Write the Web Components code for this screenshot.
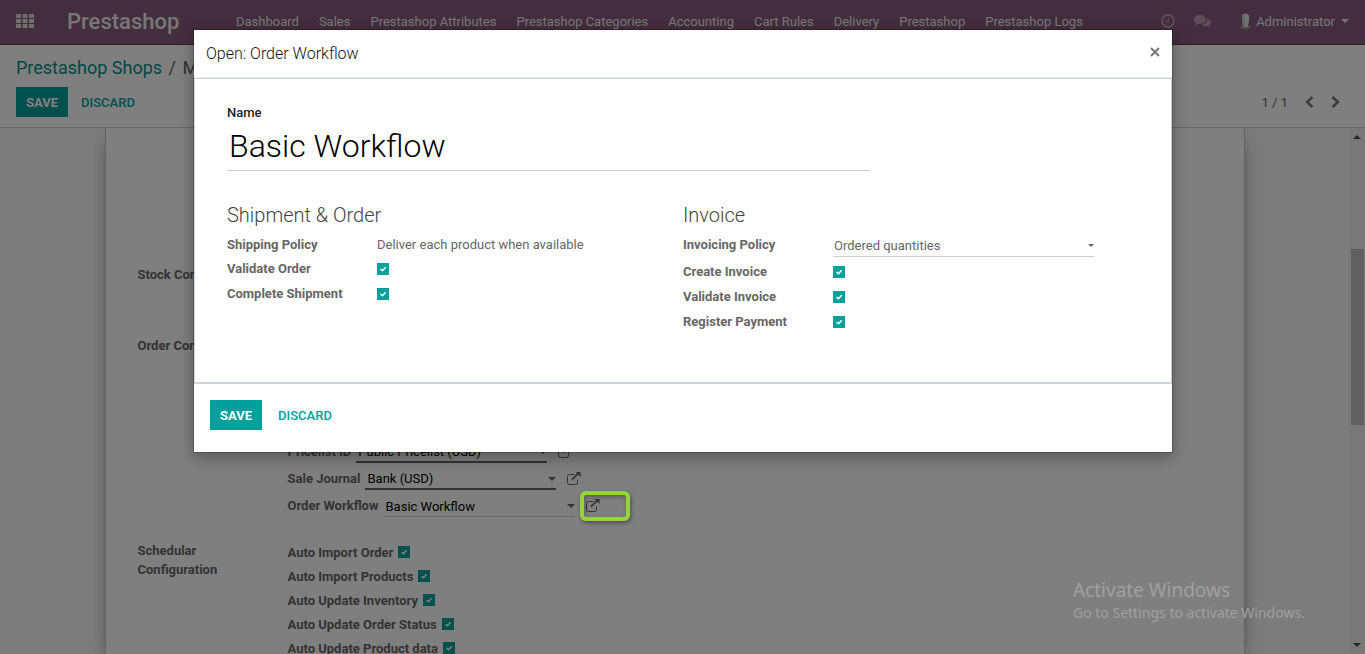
<!DOCTYPE html>
<html lang="en">
<head>
<meta charset="utf-8">
<meta name="viewport" content="width=device-width, initial-scale=1">
<title>Prestashop Shops</title>
<style>
    body {
        margin: 0;
        font-family: Roboto, "Liberation Sans", sans-serif;
        font-size: 13px;
        color: #666;
    }
</style>
</head>
<body>
<shop-app></shop-app>

<script>
const CARET = '<svg class="caret" width="8" height="4" viewBox="0 0 8 4" aria-hidden="true"><path d="M0 0h8L4 4z" fill="currentColor"/></svg>';

function define(name, html, setup) {
    const template = document.createElement('template');
    template.innerHTML = html;

    customElements.define(name, class extends HTMLElement {
        constructor() {
            super();
            this.attachShadow({ mode: 'open' });
            this.shadowRoot.appendChild(template.content.cloneNode(true));
        }

        connectedCallback() {
            if (setup) setup(this, this.shadowRoot);
        }
    });
}

define('flat-button', `
    <style>
        :host { display: inline-flex; }
        button {
            height: 30px;
            padding: 0 10px;
            border: 0;
            background: #00a09d;
            color: #fff;
            font: 700 13px Roboto, sans-serif;
            text-transform: uppercase;
            cursor: pointer;
        }
        :host([link]) button {
            padding: 0;
            background: none;
            color: #00a09d;
            font-weight: 500;
        }
    </style>
    <button type="button"><slot></slot></button>
`);

define('check-field', `
    <style>
        :host { display: flex; align-items: center; height: 24px; }
        label { width: var(--label-width, auto); margin-right: var(--label-gap, 5px); font-weight: 700; white-space: nowrap; }
        .box { display: grid; width: 12px; height: 12px; }
        input, svg { grid-area: 1 / 1; margin: 0; width: 12px; height: 12px; }
        input { appearance: none; background: #fff; border: 1px solid #00a09d; }
        input:checked { background: #00a09d; }
        svg { pointer-events: none; visibility: hidden; }
        input:checked + svg { visibility: visible; }
    </style>
    <label for="check"></label>
    <span class="box">
        <input id="check" type="checkbox" checked>
        <svg viewBox="0 0 12 12"><path d="M3.500 6l2 1.700 3.200-3.400" fill="none" stroke="#fff" stroke-width="1.600"/></svg>
    </span>
`, (host, root) => {
    root.querySelector('label').textContent = host.getAttribute('label');
});

define('select-field', `
    <style>
        :host { display: flex; align-items: center; height: 27px; }
        label { width: var(--label-width, auto); margin-right: var(--label-gap, 5px); font-weight: 700; white-space: nowrap; }
        .control { display: grid; align-items: center; width: 191px; }
        select {
            grid-area: 1 / 1;
            appearance: none;
            box-sizing: border-box;
            width: 100%;
            height: 22px;
            padding: 2px 16px 0 2px;
            border: 0;
            border-bottom: 2px solid #666;
            border-radius: 0;
            background: none;
            color: #000;
            font: 13px Roboto, sans-serif;
        }
        .caret { grid-area: 1 / 1; justify-self: end; pointer-events: none; }
        a { display: flex; margin-left: 11px; color: #666; }
        :host([light]) select { border-bottom: 1px solid #ccc; }
        :host([wide]) { align-items: flex-start; height: 26px; }
        :host([wide]) label { line-height: 24px; }
        :host([wide]) .control { flex: 1; }
        :host([wide]) select { height: 24px; padding-left: 1px; color: #666; }
        :host([wide]) .caret { width: 6px; height: 3px; }
        :host([wide]) a { display: none; }
    </style>
    <label for="choice"></label>
    <span class="control">
        <select id="choice"><option></option></select>
        ${CARET}
    </span>
    <a href="#open" aria-label="External link">
        <svg width="14" height="13" viewBox="0 0 14 13" fill="none" stroke="currentColor">
            <path d="M7.500 2.500h-5a2 2 0 0 0-2 2v6a2 2 0 0 0 2 2h6a2 2 0 0 0 2-2V7.500"/>
            <path d="M4.800 7.700L11 1.800" stroke-width="1.800"/>
            <path d="M8.500 0H13.500V5z" fill="currentColor" stroke="none"/>
        </svg>
    </a>
`, (host, root) => {
    root.querySelector('label').textContent = host.getAttribute('label');
    root.querySelector('option').textContent = host.getAttribute('value');
});

define('nav-bar', `
    <style>
        :host {
            display: flex;
            align-items: center;
            box-sizing: border-box;
            height: 45px;
            padding: 0 16px 2px;
            background: #895a7d;
            border-bottom: 1px solid #5f3f57;
            color: #eee;
            white-space: nowrap;
        }
        a { color: inherit; text-decoration: none; }
        button { display: flex; align-items: center; padding: 0; border: 0; background: none; color: inherit; font: 13px Roboto, sans-serif; }
        .brand { width: 169px; margin-left: 33px; font-size: 22px; font-weight: 500; }
        nav { display: flex; flex: 1; gap: 20px; }
        .tray { display: flex; align-items: center; gap: 19px; color: #b69cb0; }
        .user { margin-left: 10px; color: #eee; gap: 5px; }
        .user .caret { margin-left: 1px; }
    </style>
    <button type="button" aria-label="Applications">
        <svg width="18" height="14" viewBox="0 0 18 14" fill="#ddd"><path d="M0 0h5v4H0zM6.500 0h5v4h-5zM13 0h5v4h-5zM0 5h5v4H0zM6.500 5h5v4h-5zM13 5h5v4h-5zM0 10h5v4H0zM6.500 10h5v4h-5zM13 10h5v4h-5z"/></svg>
    </button>
    <a class="brand" href="#home">Prestashop</a>
    <nav></nav>
    <div class="tray">
        <button type="button" aria-label="Activities">
            <svg width="14" height="14" viewBox="0 0 14 14" fill="none" stroke="currentColor"><circle cx="7" cy="7" r="5.900" stroke-width="2"/><path d="M7.500 3.500v4H4.500" stroke-width="1.300"/></svg>
        </button>
        <button type="button" aria-label="Messages">
            <svg width="17" height="14" viewBox="0 0 17 14" fill="currentColor"><path d="M6 1c3.400 0 6 2 6 4.400S9.400 9.800 6 9.800c-.6 0-1.100 0-1.600-.1C3.500 10.500 2.200 11 1 11.100c.6-.6 1-1.300 1.100-2.200C.8 8.100 0 6.800 0 5.400 0 3 2.600 1 6 1z"/><path d="M13 4.300c2.300.7 4 2.100 4 4 0 1.200-.7 2.200-1.800 3 .1.800.5 1.500 1.100 2-1.200-.1-2.300-.5-3.200-1.200-2.300.4-4.600-.1-6-1.300 3.700 0 6.300-2.400 5.900-6.500z"/></svg>
        </button>
        <button class="user" type="button">
            <svg width="11" height="16" viewBox="0 0 11 16"><path d="M0 15c.3-1.600 1.500-2.300 3-2.700h5c1.500.4 2.700 1.100 3 2.700-3 1.200-8 1.200-11 0z" fill="#8fa09d"/><path d="M2 3.500C2 1.500 3.500.5 5.500.5S9 1.500 9 3.500v4C9 10 7.500 12 7.500 14h-4C3.500 12 2 10 2 7.500z" fill="#dce6e3"/><path d="M2 4v4c0 2 1.500 4 1.500 6h1V4z" fill="#bac8c4"/></svg>
            Administrator
            ${CARET}
        </button>
    </div>
`, (host, root) => {
    const items = ['Dashboard', 'Sales', 'Prestashop Attributes', 'Prestashop Categories', 'Accounting', 'Cart Rules', 'Delivery', 'Prestashop', 'Prestashop Logs'];
    root.querySelector('nav').innerHTML = items.map(item => `<a href="#menu">${item}</a>`).join('');
});

define('control-panel', `
    <style>
        :host {
            display: flex;
            flex-direction: column;
            box-sizing: border-box;
            height: 83px;
            padding: 12px 25px 10px 16px;
            gap: 8px;
            background: #fff;
            border-bottom: 1px solid #ccc;
        }
        .crumbs { font-size: 18px; line-height: 22px; }
        .crumbs a { color: #00918e; text-decoration: none; }
        .crumbs span { margin: 0 2px; }
        .bar { display: flex; align-items: center; }
        .bar flat-button + flat-button { margin-left: 13px; }
        .pager { display: flex; align-items: center; gap: 17px; margin-left: auto; }
        .pager button { display: flex; padding: 0; border: 0; background: none; color: #777; }
    </style>
    <div class="crumbs"><a href="#shops">Prestashop Shops</a> <span>/</span> M</div>
    <div class="bar">
        <flat-button>Save</flat-button>
        <flat-button link>Discard</flat-button>
        <div class="pager">
            1 / 1
            <button type="button" aria-label="Previous"><svg width="9" height="12" viewBox="0 0 9 12" fill="none" stroke="currentColor" stroke-width="2.500"><path d="M7.500 1L2 6l5.500 5"/></svg></button>
            <button type="button" aria-label="Next"><svg width="9" height="12" viewBox="0 0 9 12" fill="none" stroke="currentColor" stroke-width="2.500"><path d="M1.500 1L7 6l-5.500 5"/></svg></button>
        </div>
    </div>
`);

define('form-section', `
    <style>
        :host { display: grid; grid-template-columns: 150px 1fr; }
        h3 { margin: 1px 0 0; padding-right: 20px; font-size: 13px; line-height: 19px; font-weight: 700; }
    </style>
    <h3></h3>
    <div><slot></slot></div>
`, (host, root) => {
    root.querySelector('h3').textContent = host.getAttribute('label');
});

define('form-sheet', `
    <style>
        :host {
            display: block;
            box-sizing: border-box;
            width: 1140px;
            max-width: 100%;
            margin: 0 auto;
            padding: 136px 32px 0;
            background: #fff;
            border: solid #c8c8d3;
            border-width: 0 1px;
            box-shadow: 0 5px 20px -10px #000;
        }
        .stock { height: 71px; }
        .order { padding-bottom: 21px; }
        .fields { padding-top: 103px; }
    </style>
    <form-section class="stock" label="Stock Config"></form-section>
    <form-section class="order" label="Order Config">
        <div class="fields">
            <select-field label="Pricelist ID" value="Public Pricelist (USD)"></select-field>
            <select-field label="Sale Journal" value="Bank (USD)"></select-field>
            <select-field light label="Order Workflow" value="Basic Workflow"></select-field>
        </div>
    </form-section>
    <form-section label="Schedular Configuration">
        <check-field label="Auto Import Order"></check-field>
        <check-field label="Auto Import Products"></check-field>
        <check-field label="Auto Update Inventory"></check-field>
        <check-field label="Auto Update Order Status"></check-field>
        <check-field label="Auto Update Product data"></check-field>
    </form-section>
`);

define('scroll-track', `
    <style>
        :host { display: flex; flex-direction: column; align-items: center; width: 16px; background: #f1f1f1; color: #505050; }
        svg { flex: none; padding: 7px 0; }
        .before { flex: 103; }
        .thumb { flex: 177; width: 13px; background: #c1c1c1; }
        .after { flex: 212; }
    </style>
    <svg width="8" height="4" viewBox="0 0 8 4"><path d="M0 4h8L4 0z" fill="currentColor"/></svg>
    <div class="before"></div>
    <div class="thumb"></div>
    <div class="after"></div>
    ${CARET}
`);

define('field-group', `
    <style>
        :host { display: block; padding-right: 45px; --label-width: 150px; --label-gap: 0; }
        h2 { margin: 0 0 6px; font-size: 20px; line-height: 24px; font-weight: 300; color: #444; }
        ::slotted(check-field) { height: 25px; }
    </style>
    <h2></h2>
    <slot></slot>
`, (host, root) => {
    root.querySelector('h2').textContent = host.getAttribute('label');
});

define('text-value', `
    <style>
        :host { display: flex; height: 23px; line-height: 24px; }
        b { width: var(--label-width); }
    </style>
    <b></b>
    <slot></slot>
`, (host, root) => {
    root.querySelector('b').textContent = host.getAttribute('label');
});

define('modal-dialog', `
    <style>
        :host {
            display: block;
            box-sizing: border-box;
            width: 980px;
            max-width: 100%;
            background: #fff;
            background-clip: padding-box;
            border: 1px solid rgba(0, 0, 0, 0.2);
            box-shadow: 0 5px 15px rgba(0, 0, 0, 0.3);
        }
        header { display: flex; justify-content: space-between; height: 47px; padding: 0 8px 0 12px; border-bottom: 1px solid #e9ecef; }
        h1 { margin: 0; font-size: 16px; line-height: 47px; font-weight: 300; color: #111; }
        header button { display: flex; align-self: center; margin: 0 0 4px; padding: 4px; border: 0; background: none; color: #777; }
        main { border: 1px solid #ced4da; border-bottom-width: 2px; }
        footer { display: flex; gap: 16px; padding: 16px 16px 22px; }
    </style>
    <header>
        <h1></h1>
        <button type="button" aria-label="Close"><svg width="10" height="10" viewBox="0 0 10 10" stroke="currentColor" stroke-width="2"><path d="M1 1l8 8M9 1L1 9"/></svg></button>
    </header>
    <main><slot></slot></main>
    <footer>
        <flat-button>Save</flat-button>
        <flat-button link>Discard</flat-button>
    </footer>
`, (host, root) => {
    root.querySelector('h1').textContent = host.getAttribute('label');
    host.setAttribute('role', 'dialog');
});

define('workflow-form', `
    <style>
        :host { display: block; padding: 24px 32px 48px; }
        label { display: block; font-weight: 500; line-height: 20px; color: #212529; }
        input {
            display: block;
            box-sizing: border-box;
            width: 100%;
            max-width: 643px;
            height: 48px;
            padding: 0 2px 2px;
            border: 0;
            border-bottom: 1px solid #ccc;
            color: #000;
            font: 300 32px Roboto, sans-serif;
        }
        .groups { display: grid; grid-template-columns: 1fr 1fr; margin-top: 32px; }
    </style>
    <label for="name">Name</label>
    <input id="name" type="text" value="Basic Workflow">
    <div class="groups">
        <field-group label="Shipment &amp; Order">
            <text-value label="Shipping Policy">Deliver each product when available</text-value>
            <check-field label="Validate Order"></check-field>
            <check-field label="Complete Shipment"></check-field>
        </field-group>
        <field-group label="Invoice">
            <select-field wide light label="Invoicing Policy" value="Ordered quantities"></select-field>
            <check-field label="Create Invoice"></check-field>
            <check-field label="Validate Invoice"></check-field>
            <check-field label="Register Payment"></check-field>
        </field-group>
    </div>
`);

define('activation-note', `
    <style>
        :host { display: block; width: 236px; color: #a0a0a0; font-family: "Noto Sans", "Open Sans", sans-serif; white-space: nowrap; }
        strong { display: block; font-size: 19px; line-height: 26px; font-weight: 400; }
        span { display: block; font-size: 14px; line-height: 20px; }
    </style>
    <strong>Activate Windows</strong>
    <span>Go to Settings to activate Windows.</span>
`);

define('shop-app', `
    <style>
        :host { display: flex; flex-direction: column; position: relative; height: 100vh; overflow: hidden; }
        nav-bar, control-panel { flex: none; }
        .content { display: flex; flex: 1; min-height: 0; }
        .view { flex: 1; min-width: 0; overflow: hidden; background: #f8f8f8; }
        .backdrop {
            position: absolute;
            inset: 0;
            display: flex;
            justify-content: center;
            align-items: flex-start;
            padding: 29px 0 0 1px;
            background: rgba(0, 0, 0, 0.5);
        }
        .marker {
            position: absolute;
            left: 580px;
            top: 491px;
            box-sizing: border-box;
            width: 50px;
            height: 30px;
            border: 4px solid #92d63c;
            border-radius: 6px;
            box-shadow: 1px 2px 4px rgba(0, 0, 0, 0.4), inset 1px 2px 4px rgba(0, 0, 0, 0.3);
            pointer-events: none;
        }
        activation-note { position: absolute; right: 56px; bottom: 31px; pointer-events: none; }
    </style>
    <nav-bar></nav-bar>
    <control-panel></control-panel>
    <div class="content">
        <div class="view"><form-sheet></form-sheet></div>
        <scroll-track></scroll-track>
    </div>
    <div class="backdrop">
        <modal-dialog label="Open: Order Workflow">
            <workflow-form></workflow-form>
        </modal-dialog>
    </div>
    <div class="marker"></div>
    <activation-note></activation-note>
`);
</script>
</body>
</html>
